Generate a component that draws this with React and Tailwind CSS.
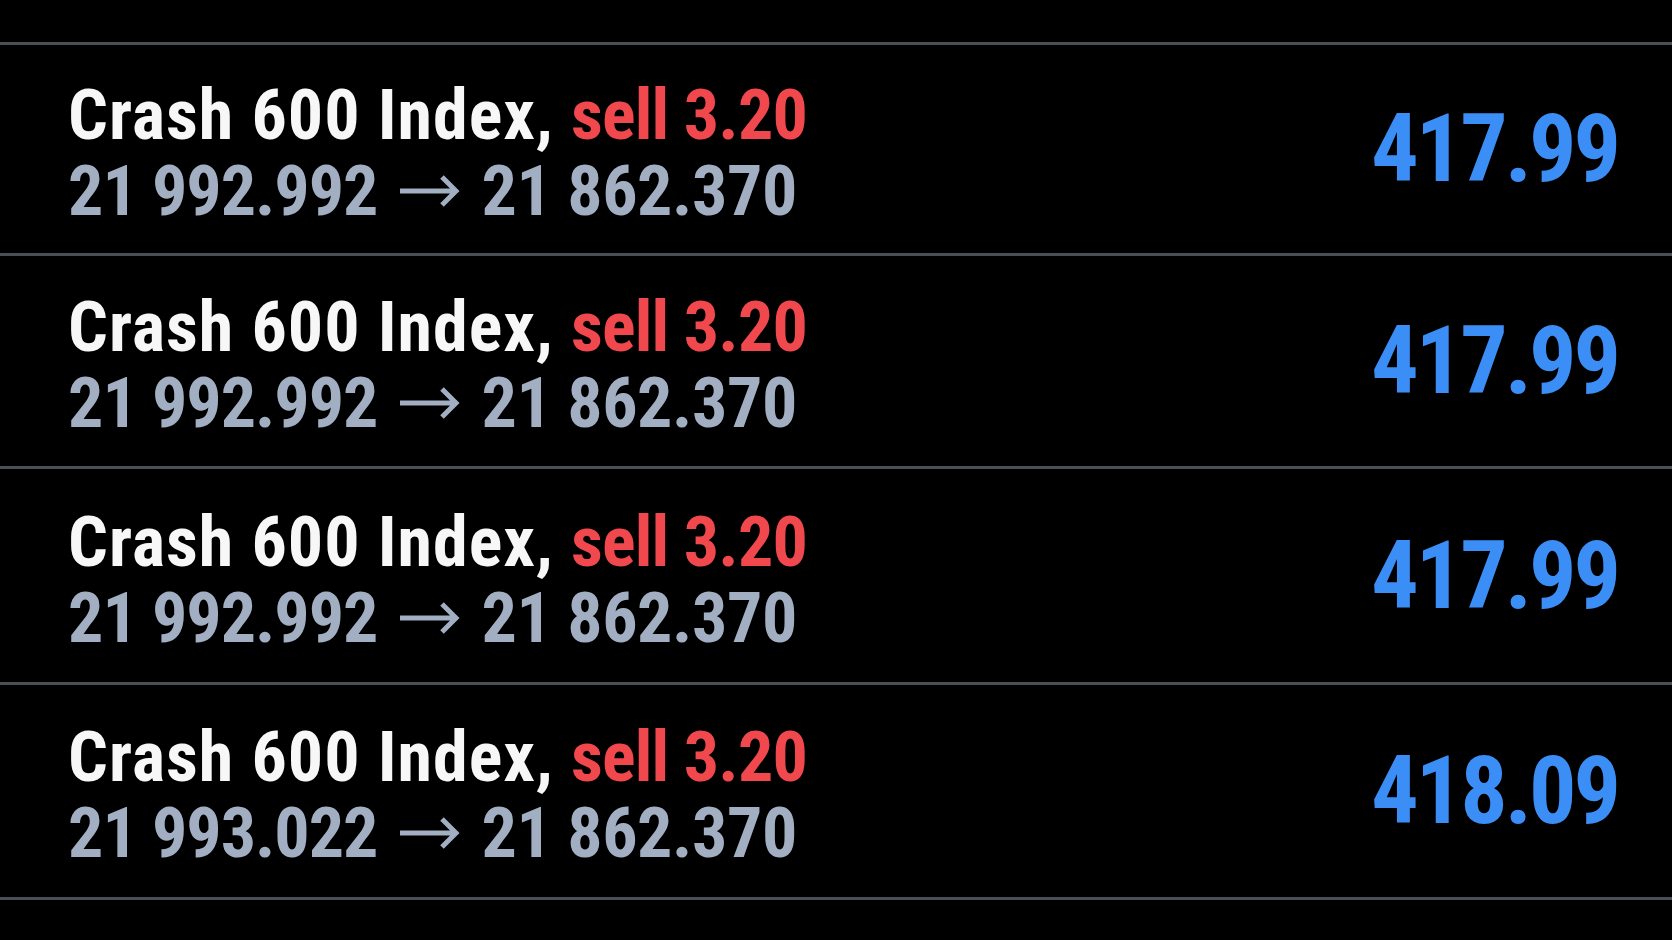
const rows = [
  { from: "21 992.992", to: "21 862.370", profit: "417.99", h: "h-[211px]" },
  { from: "21 992.992", to: "21 862.370", profit: "417.99", h: "h-[213px]" },
  { from: "21 992.992", to: "21 862.370", profit: "417.99", h: "h-[216px]" },
  { from: "21 993.022", to: "21 862.370", profit: "418.09", h: "h-[215px]" },
];

function Arrow() {
  return (
    <svg width="62" height="34" viewBox="0 0 62 34" className="mx-[21px] inline-block">
      <path
        d="M2 17 H58 M44 3 L58 17 L44 31"
        fill="none"
        stroke="#a2aec1"
        strokeWidth="5"
        strokeLinecap="butt"
        strokeLinejoin="miter"
      />
    </svg>
  );
}

export default function App() {
  return (
    <div className="min-h-screen w-full bg-black pt-[42px] font-['Roboto_Condensed','Roboto',sans-serif] [font-stretch:condensed]">
      {rows.map((r, i) => (
        <div
          key={i}
          className={`flex ${r.h} items-center justify-between border-t-[3px] border-[#4a4e56] pl-[68px] pr-[54px] font-bold`}
        >
          <div className="pt-[8px]">
            <div className="text-[70px] leading-[76px] text-[#f7f7f7] whitespace-nowrap">
              <span className="tracking-[1px]">Crash 600 Index, </span>
              <span className="tracking-[-0.8px] text-[#f0484c]">sell 3.20</span>
            </div>
            <div className="flex items-center text-[70px] leading-[76px] text-[#a2aec1] whitespace-nowrap">
              <span className="tracking-[-1px]">{r.from}</span>
              <Arrow />
              <span className="tracking-[-0.4px]">{r.to}</span>
            </div>
          </div>
          <div className="text-[94px] leading-none tracking-[-3px] text-[#3b8ef6]">{r.profit}</div>
        </div>
      ))}
      <div className="border-t-[3px] border-[#4a4e56]" />
    </div>
  );
}
